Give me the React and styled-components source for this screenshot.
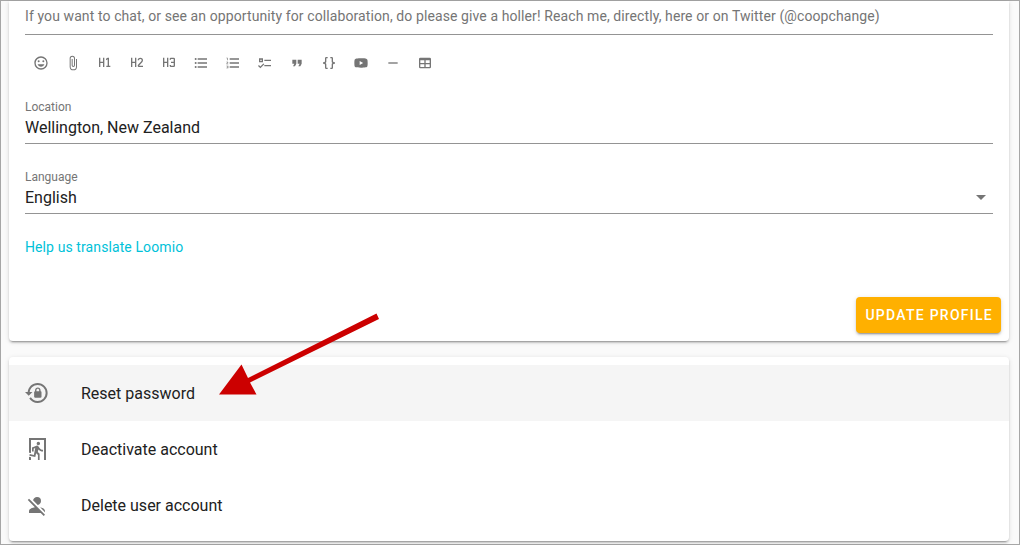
import React from "react";
import styled, { createGlobalStyle } from "styled-components";

const GlobalStyle = createGlobalStyle`
  * { box-sizing: border-box; }
  body { margin: 0; background: #fafafa; color: #212121; font-family: Roboto, "Liberation Sans", sans-serif; }
  button, input, select, textarea { font-family: inherit; color: inherit; }
`;

const Page = styled.main`
  position: relative;
  display: flex;
  flex-direction: column;
  gap: 16px;
  min-height: 100vh;
  padding: 0 10px 3px 8px;
  border: 1px solid #a6a6a6;
`;

const Card = styled.section`
  background: #fff;
  border-radius: ${(p) => (p.$continued ? "0 0 4px 4px" : "4px")};
  box-shadow: 0 3px 1px -2px rgba(0, 0, 0, 0.2), 0 2px 2px 0 rgba(0, 0, 0, 0.14), 0 1px 5px 0 rgba(0, 0, 0, 0.12);
`;

const ProfileForm = styled.form`
  display: flex;
  flex-direction: column;
  padding: 0 16px;
`;

const Bio = styled.textarea`
  display: block;
  width: 100%;
  height: 34px;
  padding: 5px 0 8px;
  border: 0;
  border-bottom: 1px solid #949494;
  outline: 0;
  resize: none;
  overflow: hidden;
  background: transparent;
  color: #757575;
  font-size: 14px;
  line-height: 20px;
  letter-spacing: 0.007em;
`;

const Toolbar = styled.div`
  display: flex;
  margin: 12px 0 20px;
`;

const ToolButton = styled.button`
  display: grid;
  place-items: center;
  width: 32px;
  height: 32px;
  padding: 0;
  border: 0;
  background: transparent;
  cursor: pointer;
`;

const Glyph = styled.svg`
  display: block;
  width: ${(p) => p.$size}px;
  height: ${(p) => p.$size}px;
  fill: #757575;
`;

const Field = styled.div`
  display: flex;
  flex-direction: column;
  margin-bottom: 25px;
  border-bottom: 1px solid #949494;
`;

const FieldLabel = styled.label`
  color: #757575;
  font-size: 12px;
  line-height: 16px;
`;

const TextInput = styled.input`
  width: 100%;
  height: 28px;
  padding: 0 0 3px;
  border: 0;
  outline: 0;
  background: transparent;
  font-size: 16px;
`;

const SelectRow = styled.div`
  display: grid;
  align-items: start;
  grid-template-columns: 1fr 24px;
`;

const Select = styled.select`
  grid-column: 1 / 3;
  grid-row: 1;
  height: 28px;
  padding: 0 0 3px;
  border: 0;
  outline: 0;
  appearance: none;
  background: transparent;
  font-size: 16px;
`;

const SelectArrow = styled(Glyph)`
  grid-column: 2;
  grid-row: 1;
  pointer-events: none;
`;

const TranslateLink = styled.a`
  align-self: flex-start;
  color: #00c2d9;
  font-size: 14px;
  line-height: 16px;
  letter-spacing: 0.007em;
  text-decoration: none;
  margin-bottom: 42px;
`;

const Actions = styled.div`
  display: flex;
  justify-content: flex-end;
  margin-right: -8px;
  padding-bottom: 8px;
`;

const SubmitButton = styled.button`
  height: 36px;
  padding: 0 8px 0 9px;
  border: 0;
  border-radius: 4px;
  background: #ffb000;
  color: #fff;
  font-size: 14px;
  font-weight: 500;
  letter-spacing: 0.09em;
  text-transform: uppercase;
  white-space: nowrap;
  box-shadow: 0 3px 1px -2px rgba(0, 0, 0, 0.2), 0 2px 2px 0 rgba(0, 0, 0, 0.14), 0 1px 5px 0 rgba(0, 0, 0, 0.12);
  cursor: pointer;
`;

const ActionList = styled.div`
  display: flex;
  flex-direction: column;
  padding: 8px 0;
`;

const ActionItem = styled.button`
  display: flex;
  align-items: center;
  gap: 32px;
  height: 56px;
  padding: 0 16px;
  border: 0;
  background: ${(p) => (p.$active ? "#f5f5f5" : "transparent")};
  font-size: 16px;
  text-align: left;
  cursor: pointer;
`;

const Pointer = styled.svg`
  position: absolute;
  left: 217px;
  top: 312px;
  width: 164px;
  height: 84px;
  fill: #cc0000;
  pointer-events: none;
`;

const H = "M3,4H5V10H9V4H11V18H9V12H5V18H3V4";

const tools = [
  ["Emoji", "M12,2C6.47,2 2,6.5 2,12A10,10 0 0,0 12,22A10,10 0 0,0 22,12A10,10 0 0,0 12,2M12,20A8,8 0 0,1 4,12A8,8 0 0,1 12,4A8,8 0 0,1 20,12A8,8 0 0,1 12,20M15.5,11A1.5,1.5 0 0,0 17,9.5A1.5,1.5 0 0,0 15.5,8A1.5,1.5 0 0,0 14,9.5A1.5,1.5 0 0,0 15.5,11M8.5,11A1.5,1.5 0 0,0 10,9.5A1.5,1.5 0 0,0 8.5,8A1.5,1.5 0 0,0 7,9.5A1.5,1.5 0 0,0 8.5,11M12,17.5C14.33,17.5 16.3,16.04 17.11,14H6.89C7.69,16.04 9.67,17.5 12,17.5Z"],
  ["Attach file", "M16.5,6V17.5A4,4 0 0,1 12.5,21.5A4,4 0 0,1 8.5,17.5V5A2.5,2.5 0 0,1 11,2.5A2.5,2.5 0 0,1 13.5,5V15.5A1,1 0 0,1 12.5,16.5A1,1 0 0,1 11.5,15.5V6H10V15.5A2.5,2.5 0 0,0 12.5,18A2.5,2.5 0 0,0 15,15.5V5A4,4 0 0,0 11,1A4,4 0 0,0 7,5V17.5A5.5,5.5 0 0,0 12.5,23A5.5,5.5 0 0,0 18,17.5V6H16.5Z"],
  ["Heading 1", H + "M14,18V16H16V6.31L13.5,7.75V5.44L16,4H18V16H20V18H14Z"],
  ["Heading 2", H + "M21,18H15A2,2 0 0,1 13,16C13,15.47 13.2,15 13.54,14.64L18.41,9.41C18.78,9.05 19,8.55 19,8A2,2 0 0,0 17,6A2,2 0 0,0 15,8H13A4,4 0 0,1 17,4A4,4 0 0,1 21,8C21,9.1 20.55,10.1 19.83,10.83L15,16H21V18Z"],
  ["Heading 3", H + "M15,4H19A2,2 0 0,1 21,6V16A2,2 0 0,1 19,18H15A2,2 0 0,1 13,16V15H15V16H19V12H15V10H19V6H15V7H13V6A2,2 0 0,1 15,4Z"],
  ["Bulleted list", "M7,5H21V7H7V5M7,13V11H21V13H7M4,4.5A1.5,1.5 0 0,1 5.5,6A1.5,1.5 0 0,1 4,7.5A1.5,1.5 0 0,1 2.5,6A1.5,1.5 0 0,1 4,4.5M4,10.5A1.5,1.5 0 0,1 5.5,12A1.5,1.5 0 0,1 4,13.5A1.5,1.5 0 0,1 2.5,12A1.5,1.5 0 0,1 4,10.5M7,19V17H21V19H7M4,16.5A1.5,1.5 0 0,1 5.5,18A1.5,1.5 0 0,1 4,19.5A1.5,1.5 0 0,1 2.5,18A1.5,1.5 0 0,1 4,16.5Z"],
  ["Numbered list", "M7,13V11H21V13H7M7,19V17H21V19H7M7,7V5H21V7H7M3,8V5H2V4H4V8H3M2,17V16H5V20H2V19H4V18.5H3V17.5H4V17H2M4.25,10A0.75,0.75 0 0,1 5,10.75C5,10.95 4.92,11.14 4.79,11.27L3.12,13H5V14H2V13.08L4,11H2V10H4.25Z"],
  ["Check list", "M3,5H9V11H3V5M5,7V9H7V7H5M11,7H21V9H11V7M11,15H21V17H11V15M5,20L1.5,16.5L2.91,15.09L5,17.17L9.59,12.59L11,14L5,20Z"],
  ["Quote", "M14,17H17L19,13V7H13V13H16M6,17H9L11,13V7H5V13H8L6,17Z"],
  ["Code", "M8,3A2,2 0 0,0 6,5V9A2,2 0 0,1 4,11H3V13H4A2,2 0 0,1 6,15V19A2,2 0 0,0 8,21H10V19H8V14A2,2 0 0,0 6,12A2,2 0 0,0 8,10V5H10V3M16,3A2,2 0 0,1 18,5V9A2,2 0 0,0 20,11H21V13H20A2,2 0 0,0 18,15V19A2,2 0 0,1 16,21H14V19H16V14A2,2 0 0,1 18,12A2,2 0 0,1 16,10V5H14V3H16Z"],
  ["Video", "M10,15L15.19,12L10,9V15M21.56,7.17C21.69,7.64 21.78,8.27 21.84,9.07C21.91,9.87 21.94,10.56 21.94,11.16L22,12C22,14.19 21.84,15.8 21.56,16.83C21.31,17.73 20.73,18.31 19.83,18.56C19.36,18.69 18.5,18.78 17.18,18.84C15.88,18.91 14.69,18.94 13.59,18.94L12,19C7.81,19 5.2,18.84 4.17,18.56C3.27,18.31 2.69,17.73 2.44,16.83C2.31,16.36 2.22,15.73 2.16,14.93C2.09,14.13 2.06,13.44 2.06,12.84L2,12C2,9.81 2.16,8.2 2.44,7.17C2.69,6.27 3.27,5.69 4.17,5.44C4.64,5.31 5.5,5.22 6.82,5.16C8.12,5.09 9.31,5.06 10.41,5.06L12,5C16.19,5 18.8,5.16 19.83,5.44C20.73,5.69 21.31,6.27 21.56,7.17Z"],
  ["Divider", "M19,13H5V11H19V13Z"],
  ["Table", "M5,4H19A2,2 0 0,1 21,6V18A2,2 0 0,1 19,20H5A2,2 0 0,1 3,18V6A2,2 0 0,1 5,4M5,8V12H11V8H5M13,8V12H19V8H13M5,14V18H11V14H5M13,14V18H19V14H13Z"],
];

const actions = [
  ["Reset password", "M12.63,2C18.16,2 22.64,6.5 22.64,12C22.64,17.5 18.16,22 12.63,22C9.12,22 6.05,20.18 4.26,17.43L5.84,16.18C7.25,18.47 9.76,20 12.64,20A8,8 0 0,0 20.64,12A8,8 0 0,0 12.64,4C8.56,4 5.2,7.06 4.71,11H7.47L3.73,14.73L0,11H2.69C3.19,5.95 7.45,2 12.63,2M15.59,10.24C16.09,10.25 16.5,10.65 16.5,11.16V15.77C16.5,16.27 16.09,16.69 15.58,16.69H10.05C9.54,16.69 9.13,16.27 9.13,15.77V11.16C9.13,10.65 9.54,10.25 10.04,10.24V9.23C10.04,7.7 11.29,6.46 12.81,6.46C14.34,6.46 15.59,7.7 15.59,9.23V10.24M12.81,7.86C12.06,7.86 11.44,8.47 11.44,9.23V10.24H14.19V9.23C14.19,8.47 13.57,7.86 12.81,7.86Z"],
  ["Deactivate account", "M13.34,8.17C12.41,8.17 11.65,7.4 11.65,6.47A1.69,1.69 0 0,1 13.34,4.78C14.28,4.78 15.04,5.54 15.04,6.47C15.04,7.4 14.28,8.17 13.34,8.17M10.3,19.93L4.37,18.75L4.71,17.05L8.86,17.9L10.21,11.04L8.69,11.64V14.5H7V10.54L11.4,8.67L12.07,8.59C12.67,8.59 13.17,8.93 13.5,9.44L14.36,10.79C15.04,12 16.39,12.82 18,12.82V14.5C16.14,14.5 14.44,13.67 13.34,12.4L12.84,14.94L14.61,16.63V23H12.92V17.9L11.14,16.21L10.3,19.93M21,23H19V3H6V16.11L4,15.69V1H21V23M6,23H4V19.78L6,20.2V23Z"],
  ["Delete user account", "M12,4A4,4 0 0,1 16,8C16,9.95 14.6,11.58 12.75,11.93L8.07,7.25C8.42,5.4 10.05,4 12,4M12.28,14L18.28,20L20,21.72L18.73,23L15.73,20H4V18C4,16.16 6.5,14.61 9.87,14.14L2.78,7.05L4.05,5.78L12.28,14M20,18V19.18L15.14,14.32C18,14.93 20,16.35 20,18Z"],
];

function Icon({ path, size }) {
  return (
    <Glyph $size={size} viewBox="0 0 24 24" aria-hidden="true">
      <path d={path} />
    </Glyph>
  );
}

export default function App() {
  return (
    <>
      <GlobalStyle />
      <Page>
        <Card $continued>
          <ProfileForm onSubmit={(e) => e.preventDefault()}>
            <Bio
              aria-label="Bio"
              rows={1}
              spellCheck={false}
              defaultValue="If you want to chat, or see an opportunity for collaboration, do please give a holler! Reach me, directly, here or on Twitter (@coopchange)"
            />
            <Toolbar role="toolbar" aria-label="Formatting">
              {tools.map(([name, path]) => (
                <ToolButton key={name} type="button" aria-label={name}>
                  <Icon path={path} size={16} />
                </ToolButton>
              ))}
            </Toolbar>
            <Field>
              <FieldLabel htmlFor="location">Location</FieldLabel>
              <TextInput id="location" defaultValue="Wellington, New Zealand" />
            </Field>
            <Field>
              <FieldLabel htmlFor="language">Language</FieldLabel>
              <SelectRow>
                <Select id="language" defaultValue="en">
                  <option value="en">English</option>
                </Select>
                <SelectArrow $size={24} viewBox="0 0 24 24" aria-hidden="true">
                  <path d="M7,10L12,15L17,10H7Z" />
                </SelectArrow>
              </SelectRow>
            </Field>
            <TranslateLink href="#translate">Help us translate Loomio</TranslateLink>
            <Actions>
              <SubmitButton type="submit">Update profile</SubmitButton>
            </Actions>
          </ProfileForm>
        </Card>
        <Card>
          <ActionList>
            {actions.map(([label, path], i) => (
              <ActionItem key={label} type="button" $active={i === 0}>
                <Icon path={path} size={24} />
                {label}
              </ActionItem>
            ))}
          </ActionList>
        </Card>
        <Pointer viewBox="218 313 164 84" aria-hidden="true">
          <path d="M219 394.500L241.500 364.500L248 378L376.500 313.500L379 319L250 382.500L256.500 394.500Z" />
        </Pointer>
      </Page>
    </>
  );
}
